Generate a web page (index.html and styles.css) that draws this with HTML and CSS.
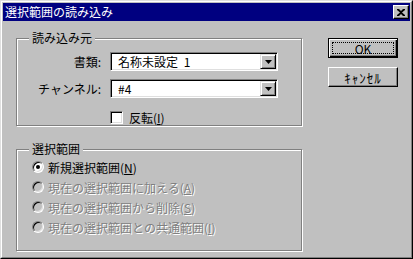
FILE: index.html
```html
<!DOCTYPE html>
<html lang="ja">
<head>
    <meta charset="UTF-8">
    <title>選択範囲の読み込み</title>
    <link rel="stylesheet" href="styles.css">
</head>
<body>
    <div class="window">
        <div class="frame">
            <div class="titlebar">
                <span class="title">選択範囲の読み込み</span>
                <button class="close">
                    <svg width="8" height="7" viewBox="0 0 8 7"><path d="M0 0h2l2 2 2-2h2v1L5 3.5 8 6v1H6L4 5 2 7H0V6l3-2.5L0 1z" fill="#000"/></svg>
                </button>
            </div>
            <div class="content">
                <div class="left">
                    <div class="group source">
                        <span class="legend">読み込み元</span>
                        <div class="row">
                            <label class="label">書類:</label>
                            <div class="combo">
                                <span class="combo-text">名称未設定 1</span>
                                <span class="combo-btn"><svg width="7" height="4" viewBox="0 0 7 4"><path d="M0 0h7L3.5 4z" fill="#000"/></svg></span>
                            </div>
                        </div>
                        <div class="row">
                            <label class="label">チャンネル:</label>
                            <div class="combo">
                                <span class="combo-text">#4</span>
                                <span class="combo-btn"><svg width="7" height="4" viewBox="0 0 7 4"><path d="M0 0h7L3.5 4z" fill="#000"/></svg></span>
                            </div>
                        </div>
                        <div class="check-row">
                            <span class="checkbox"></span>
                            <span>反転(<u>I</u>)</span>
                        </div>
                    </div>

                    <div class="group selection">
                        <span class="legend">選択範囲</span>
                        <div class="radio-row">
                            <span class="radio"><span class="dot"></span></span>
                            <span>新規選択範囲(<u>N</u>)</span>
                        </div>
                        <div class="radio-row disabled">
                            <span class="radio"></span>
                            <span>現在の選択範囲に加える(<u>A</u>)</span>
                        </div>
                        <div class="radio-row disabled">
                            <span class="radio"></span>
                            <span>現在の選択範囲から削除(<u>S</u>)</span>
                        </div>
                        <div class="radio-row disabled">
                            <span class="radio"></span>
                            <span>現在の選択範囲との共通範囲(<u>I</u>)</span>
                        </div>
                    </div>
                </div>

                <div class="buttons">
                    <button class="btn default"><span class="focus">OK</span></button>
                    <button class="btn cancel">ｷｬﾝｾﾙ</button>
                </div>
            </div>
        </div>
    </div>
</body>
</html>
```

FILE: styles.css
```css
* {
    box-sizing: border-box;
    margin: 0;
    padding: 0;
}

body {
    background-color: #c0c0c0;
    font-family: "Noto Sans CJK JP", "DejaVu Sans", sans-serif;
    font-size: 12px;
    color: #000;
}

.window {
    width: 413px;
    height: 259px;
    border: 1px solid;
    border-color: #dfdfdf #000 #000 #dfdfdf;
}

.frame {
    height: 100%;
    border: 1px solid;
    border-color: #fff #808080 #808080 #fff;
    padding: 1px;
}

.titlebar {
    height: 18px;
    background-color: #000080;
    color: #fff;
    display: flex;
    align-items: center;
    justify-content: space-between;
    padding: 0 1px 0 2px;
}

.title {
    font-size: 12px;
    line-height: 18px;
}

.close {
    width: 16px;
    height: 14px;
    background-color: #c0c0c0;
    border: 1px solid;
    border-color: #fff #000 #000 #fff;
    box-shadow: inset -1px -1px 0 #808080;
    display: flex;
    align-items: center;
    justify-content: center;
    padding-right: 1px;
}

.content {
    display: flex;
    padding: 17px 0 0 13px;
}

.left {
    width: 286px;
}

.group {
    position: relative;
    border: 1px solid #808080;
    box-shadow: 1px 1px 0 #fff, inset 1px 1px 0 #fff;
}

.legend {
    position: absolute;
    top: -9px;
    left: 12px;
    padding: 0 3px;
    line-height: 16px;
    background-color: #c0c0c0;
}

.source {
    height: 88px;
    padding-top: 13px;
}

.row {
    display: flex;
    align-items: center;
    margin-bottom: 8px;
}

.label {
    width: 84px;
    margin-right: 9px;
    text-align: right;
}

.combo {
    width: 168px;
    height: 19px;
    display: flex;
    align-items: center;
    background-color: #fff;
    border: 1px solid;
    border-color: #808080 #fff #fff #808080;
    box-shadow: inset 1px 1px 0 #000, inset -1px -1px 0 #dfdfdf;
    padding: 1px;
}

.combo-text {
    flex: 1;
    padding-left: 6px;
    line-height: 15px;
    word-spacing: 3px;
}

.combo-btn {
    width: 16px;
    height: 15px;
    display: flex;
    align-items: center;
    justify-content: center;
    background-color: #c0c0c0;
    border: 1px solid;
    border-color: #dfdfdf #000 #000 #dfdfdf;
    box-shadow: inset 1px 1px 0 #fff, inset -1px -1px 0 #808080;
}

.check-row {
    display: flex;
    align-items: center;
    gap: 6px;
    margin: 11px 0 0 93px;
}

.checkbox {
    width: 13px;
    height: 13px;
    background-color: #fff;
    border: 1px solid;
    border-color: #808080 #fff #fff #808080;
    box-shadow: inset 1px 1px 0 #000, inset -1px -1px 0 #dfdfdf;
}

.selection {
    height: 102px;
    margin-top: 23px;
    padding: 7px 0 0 15px;
}

.radio-row {
    height: 20px;
    display: flex;
    align-items: center;
    gap: 4px;
}

.radio {
    width: 12px;
    height: 12px;
    border-radius: 50%;
    background-color: #fff;
    border: 1px solid;
    border-color: #808080 #fff #fff #808080;
    box-shadow: inset 1px 1px 0 #000, inset -1px -1px 0 #dfdfdf;
    display: flex;
    align-items: center;
    justify-content: center;
}

.dot {
    width: 4px;
    height: 4px;
    border-radius: 50%;
    background-color: #000;
}

.disabled {
    color: #808080;
    text-shadow: 1px 1px 0 #fff;
}

.disabled .radio {
    background-color: #c0c0c0;
}

.buttons {
    display: flex;
    flex-direction: column;
    gap: 9px;
    margin-left: 26px;
}

.btn {
    width: 70px;
    height: 20px;
    font-family: inherit;
    font-size: 12px;
    color: #000;
    background-color: #c0c0c0;
    border: 1px solid;
    border-color: #fff #000 #000 #fff;
    box-shadow: inset -1px -1px 0 #808080;
    display: flex;
    align-items: center;
    justify-content: center;
}

.btn.cancel {
    letter-spacing: 1px;
    font-size: 13px;
}

.btn.default {
    border-color: #000;
    box-shadow: inset 1px 1px 0 #fff, inset -1px -1px 0 #000, inset -2px -2px 0 #808080;
    padding: 3px;
}

.focus {
    width: 100%;
    height: 100%;
    border: 1px dotted #000;
    display: flex;
    align-items: center;
    justify-content: center;
}
```
